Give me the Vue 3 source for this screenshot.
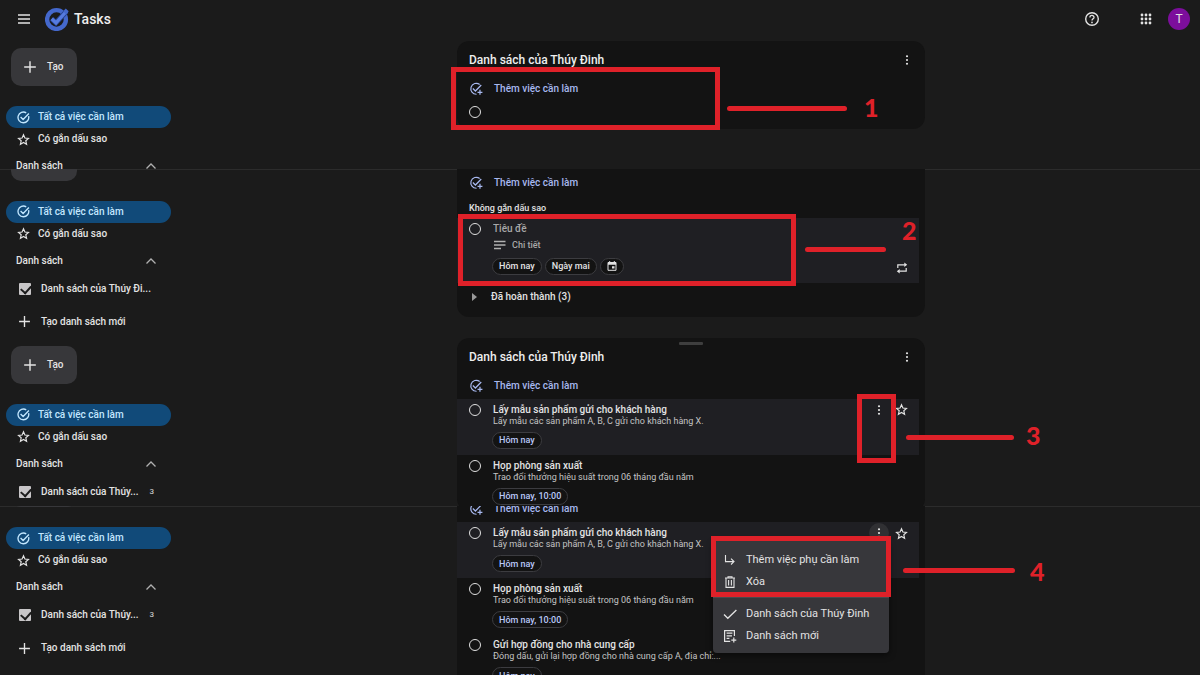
<script setup>
const listName = 'Danh sách của Thúy Đinh'

const tasks = [
  { title: 'Lấy mẫu sản phẩm gửi cho khách hàng', detail: 'Lấy mẫu các sản phẩm A, B, C gửi cho khách hàng X.', due: 'Hôm nay', active: true },
  { title: 'Họp phòng sản xuất', detail: 'Trao đổi thưởng hiệu suất trong 06 tháng đầu năm', due: 'Hôm nay, 10:00' },
  { title: 'Gửi hợp đồng cho nhà cung cấp', detail: 'Đóng dấu, gửi lại hợp đồng cho nhà cung cấp A, địa chỉ:...', due: 'Hôm nay' },
]

const panels = [
  { step: 1, list: 'Danh sách của Thúy Đi...', tasks: [] },
  { step: 2, list: 'Danh sách của Thúy Đi...', tasks: [] },
  { step: 3, list: 'Danh sách của Thúy...', count: 3, tasks: tasks.slice(0, 2) },
  { step: 4, list: 'Danh sách của Thúy...', count: 3, tasks },
]
</script>

<template>
  <div class="page">
    <svg class="defs" aria-hidden="true">
      <symbol id="plus" viewBox="0 0 24 24"><path d="M12 2v20M2 12h20" fill="none" stroke="currentColor" stroke-width="2.5" /></symbol>
      <symbol id="done" viewBox="0 0 24 24"><path d="M21.4 9.4A9.9 9.9 0 1 1 17 3.4M6.6 11l4.7 4.6L22 4.8" fill="none" stroke="currentColor" stroke-width="2.5" /></symbol>
      <symbol id="star" viewBox="0 0 24 24"><path d="M12 3.2l2.6 6.1 6.6.6-5 4.4 1.5 6.5-5.7-3.4-5.7 3.4 1.5-6.5-5-4.4 6.6-.6z" fill="none" stroke="currentColor" stroke-width="2.1" /></symbol>
      <symbol id="up" viewBox="0 0 24 24"><path d="M3 17l9-9 9 9" fill="none" stroke="currentColor" stroke-width="2.6" /></symbol>
      <symbol id="add-task" viewBox="0 0 24 24"><path d="M18.3 4.2A9.4 9.4 0 1 0 13 21M6.6 11.2l4.4 4.3L21 5.2M18.8 13.4v8.4M14.6 17.6H23" fill="none" stroke="currentColor" stroke-width="2.1" /></symbol>
      <symbol id="dots" viewBox="0 0 24 24"><g fill="currentColor"><circle cx="12" cy="3" r="2.6" /><circle cx="12" cy="12" r="2.6" /><circle cx="12" cy="21" r="2.6" /></g></symbol>
    </svg>

    <section v-for="p in panels" :key="p.step" class="panel" :class="'step-' + p.step">
      <header v-if="p.step === 1" class="topbar">
        <button class="icon-btn menu-btn" aria-label="Menu">
          <svg viewBox="0 0 14 14" width="14" height="14"><path d="M1 3h12M1 7h12M1 11h12" stroke="currentColor" stroke-width="1.4" /></svg>
        </button>
        <svg class="logo" viewBox="0 0 24 24" width="24" height="24">
          <circle cx="11.5" cy="12.5" r="9.4" fill="none" stroke="#4468cc" stroke-width="4.4" />
          <path d="M6.7 11.8l4.3 4L21.6 4.2" fill="none" stroke="#24418e" stroke-width="5" />
          <path d="M6.7 11.8l4.3 4L21.6 4.2" fill="none" stroke="#567be0" stroke-width="3.3" />
          <path d="M18.4 4.6l2.3-3 3 2.7-2.5 3.1z" fill="#4468cc" />
        </svg>
        <span class="brand">Tasks</span>
        <button class="icon-btn help" aria-label="Trợ giúp">
          <svg viewBox="0 0 16 16" width="16" height="16"><circle cx="8" cy="8" r="6.3" fill="none" stroke="currentColor" stroke-width="1.4" /><path d="M5.9 6.4C6 3.7 10.1 3.9 10 6.4 9.9 7.8 8 7.8 8 9.5" fill="none" stroke="currentColor" stroke-width="1.3" /><circle cx="8" cy="11.4" r=".85" fill="currentColor" /></svg>
        </button>
        <button class="icon-btn apps" aria-label="Ứng dụng">
          <svg viewBox="0 0 12 12" width="12" height="12" fill="currentColor"><template v-for="y in 3" :key="y"><circle v-for="x in 3" :key="x" :cx="x * 4 - 2" :cy="y * 4 - 2" r="1.4" /></template></svg>
        </button>
        <button class="avatar">T</button>
      </header>

      <aside class="sidebar">
        <button class="create"><svg width="14" height="14"><use href="#plus" /></svg>Tạo</button>
        <a class="nav selected" href="#"><svg width="13" height="13"><use href="#done" /></svg>Tất cả việc cần làm</a>
        <a class="nav" href="#"><svg width="13" height="13"><use href="#star" /></svg>Có gắn dấu sao</a>
        <button class="lists-head">Danh sách<svg width="12" height="12"><use href="#up" /></svg></button>
        <label class="list-item"><input type="checkbox" checked />{{ p.list }}<span v-if="p.count" class="count">{{ p.count }}</span></label>
        <button class="new-list"><svg width="13" height="13"><use href="#plus" /></svg>Tạo danh sách mới</button>
      </aside>

      <main class="board">
        <article class="card">
          <span v-if="p.step === 3" class="handle"></span>
          <div class="card-head">
            <h2>{{ listName }}</h2>
            <button class="icon-btn" aria-label="Tùy chọn"><svg width="10" height="10"><use href="#dots" /></svg></button>
          </div>
          <button class="add"><svg width="14" height="14"><use href="#add-task" /></svg>Thêm việc cần làm</button>

          <div v-if="p.step === 1" class="blank"><button class="ring" aria-label="Hoàn thành"></button></div>

          <template v-if="p.step === 2">
            <p class="group">Không gắn dấu sao</p>
            <div class="task editor active">
              <button class="ring" aria-label="Hoàn thành"></button>
              <div class="body">
                <input class="title-input" placeholder="Tiêu đề" aria-label="Tiêu đề" />
                <div class="detail-line">
                  <svg viewBox="0 0 12 10" width="12" height="10"><path d="M0 1.5h11.5M0 5h11.5M0 8.5h7" stroke="currentColor" stroke-width="1.3" /></svg>
                  <input placeholder="Chi tiết" aria-label="Chi tiết" />
                </div>
                <div class="chips">
                  <button class="chip">Hôm nay</button>
                  <button class="chip">Ngày mai</button>
                  <button class="chip" aria-label="Chọn ngày"><svg viewBox="0 0 10 10" width="10" height="10"><path d="M1 1.5h8v7.8H1zM2.7 0v2M7.3 0v2" fill="none" stroke="currentColor" /><path d="M1 1.2h8v2.6H1zM5 5.2h2.5v2.4H5z" fill="currentColor" /></svg></button>
                </div>
              </div>
              <button class="icon-btn repeat" aria-label="Lặp lại">
                <svg viewBox="0 0 12 12" width="12" height="12"><path d="M1.8 6V2.8h7M10.2 6v3.2h-7" fill="none" stroke="currentColor" stroke-width="1.2" /><path d="M8.3.6l2.9 2.2L8.3 5zM3.7 7L.8 9.2l2.9 2.2z" fill="currentColor" /></svg>
              </button>
            </div>
            <button class="completed"><svg viewBox="0 0 5 8" width="5" height="8"><path d="M0 0l5 4-5 4z" fill="currentColor" /></svg>Đã hoàn thành (3)</button>
          </template>

          <div v-for="t in p.tasks" :key="t.title" class="task" :class="{ active: t.active }">
            <button class="ring" aria-label="Hoàn thành"></button>
            <div class="body">
              <h3>{{ t.title }}</h3>
              <p>{{ t.detail }}</p>
              <button class="chip due">{{ t.due }}</button>
            </div>
            <div v-if="t.active" class="actions">
              <button class="icon-btn more" aria-label="Tùy chọn khác"><svg width="10" height="10"><use href="#dots" /></svg></button>
              <button class="icon-btn" aria-label="Gắn dấu sao"><svg width="13" height="13"><use href="#star" /></svg></button>
            </div>
          </div>

          <div v-if="p.step === 4" class="popup" role="menu">
            <button role="menuitem"><svg viewBox="0 0 14 14" width="14" height="14"><path d="M2.5 2v6.6h8M8 5.7l3 2.9-3 2.9" fill="none" stroke="currentColor" stroke-width="1.1" /></svg>Thêm việc phụ cần làm</button>
            <button role="menuitem"><svg viewBox="0 0 14 14" width="14" height="14"><path d="M2 3h10M5 2.6V1.8h4v.8M3 3v9.4h8V3M5.6 5v5.5M8.4 5v5.5" fill="none" stroke="currentColor" stroke-width="1.1" /></svg>Xóa</button>
            <hr />
            <button role="menuitem"><svg viewBox="0 0 14 14" width="14" height="14"><path d="M1 7.5l3.8 3.8L13.4 3" fill="none" stroke="currentColor" stroke-width="1.3" /></svg>{{ listName }}</button>
            <button role="menuitem"><svg viewBox="0 0 14 14" width="14" height="14"><path d="M11.4 7V1.6H1.6v10.8h5.6M3.6 4.2h5.8M3.6 6.8h5.4M3.6 9.4h2.8M10.8 8.6v5M8.3 11.1h5" fill="none" stroke="currentColor" stroke-width="1.2" /></svg>Danh sách mới</button>
          </div>

          <div class="mark frame"></div>
          <div class="mark pointer"></div>
          <strong class="mark number">{{ p.step }}</strong>
        </article>
      </main>
    </section>
  </div>
</template>

<style>
body { background: #1b1b1b; }
</style>

<style scoped>
* { box-sizing: border-box; }
.page {
  display: grid;
  grid-template-rows: repeat(4, minmax(0, 1fr));
  height: 100vh;
  color: #e3e3e3;
  background: #1b1b1b;
  font: 500 10px/12px Roboto, "Liberation Sans", sans-serif;
}
.defs { position: absolute; width: 0; height: 0; }
button, input { font: inherit; color: inherit; background: none; border: 0; padding: 0; margin: 0; outline: 0; }
button { display: flex; align-items: center; text-align: left; }
h2, h3, p { margin: 0; font: inherit; }
a { color: inherit; text-decoration: none; }
svg { flex: none; display: block; }

.panel {
  display: grid;
  grid-template-columns: 182px minmax(0, 1fr);
  grid-template-rows: auto minmax(0, 1fr);
  overflow: hidden;
}
.step-2, .step-4 { box-shadow: inset 0 1px #2c2c2c; }

.topbar { grid-column: 1 / -1; display: flex; align-items: center; height: 37px; padding: 0 10px 0 17px; }
.logo { margin-left: 14px; }
.brand { margin-left: 5px; font-size: 14px; line-height: 18px; color: #eee; }
.help { margin-left: auto; margin-right: 40px; }
.apps { margin-right: 16px; }
.avatar { justify-content: center; width: 22px; height: 22px; border-radius: 50%; background: #7c0e9c; font-size: 12px; font-weight: 400; }

.sidebar { display: flex; flex-direction: column; align-items: stretch; padding: 0 11px 0 6px; }
.step-1 .sidebar { margin-top: 11px; }
.step-2 .sidebar { margin-top: -26px; }
.step-3 .sidebar { margin-top: 8px; }
.step-4 .sidebar { margin-top: -37px; }
.create { flex: none; width: 66px; height: 38px; margin: 0 0 20px 5px; padding-left: 12px; gap: 10px; border-radius: 10px; background: #37373a; }
.nav { flex: none; display: flex; align-items: center; gap: 8px; height: 22px; padding-left: 11px; border-radius: 11px; }
.selected { background: #114a79; color: #c2e7ff; }
.lists-head { flex: none; justify-content: space-between; height: 22px; margin: 5px 14px 6px 10px; }
.lists-head svg { color: #b0b0b0; }
.list-item { flex: none; display: flex; align-items: center; height: 22px; margin-bottom: 11px; padding-left: 13px; }
.list-item input { appearance: none; position: relative; width: 12px; height: 12px; margin-right: 10px; border-radius: 1px; background: #c8c6c8; }
.list-item input::after { content: ""; position: absolute; left: 2px; top: 2px; width: 8px; height: 5px; border: solid #1b1b1b; border-width: 0 0 2px 2px; transform: rotate(-48deg); }
.count { margin-left: 11px; font-size: 8px; color: #c4c4c4; }
.new-list { flex: none; height: 22px; padding-left: 12px; gap: 10px; }

.board { display: flex; justify-content: center; align-items: flex-start; }
.card { position: relative; flex: 0 1 468px; min-width: 0; background: #131313; border-radius: 12px; }
.step-1 .card { margin-top: 4px; padding-bottom: 7px; }
.step-2 .card { margin-top: -34px; padding-bottom: 6px; }
.step-3 .card { margin-top: 0; }
.step-4 .card { margin-top: -45px; }
.card-head { display: flex; align-items: center; justify-content: space-between; height: 38px; padding: 0 13px 0 12px; }
.card-head h2 { font-size: 12px; line-height: 18px; color: #eee; }
.handle { position: absolute; left: 222px; top: 4px; width: 24px; height: 3px; background: #3e3e3e; border-radius: 1px; }
.add { height: 20px; margin-bottom: 3px; padding-left: 12px; gap: 11px; color: #a8b9f0; }
.icon-btn { justify-content: center; }
.ring { flex: none; width: 12px; height: 12px; border: 1px solid #e0e0e0; border-radius: 50%; }
.blank { display: flex; align-items: center; height: 20px; padding-left: 12px; }
.group { height: 22px; padding: 6px 0 0 12px; font-size: 9px; }

.task { position: relative; display: flex; align-items: flex-start; gap: 12px; height: 56px; margin-right: 6px; padding: 5px 11px 0 12px; }
.active { background: #1f1f23; }
.body { flex: 1; min-width: 0; }
.task h3 { font-size: 10px; line-height: 12px; white-space: nowrap; }
.task p { font-size: 9px; line-height: 11px; font-weight: 400; color: #c4c4c4; white-space: nowrap; }
.chip { height: 17px; padding: 0 6px; border: 1px solid #3c3c40; border-radius: 9px; background: #131313; font-size: 9px; }
.chip.due { margin: 5px 0 0 -1px; color: #b9c8f8; }
.actions { display: flex; align-items: center; gap: 6px; height: 12px; }
.more { width: 20px; height: 20px; border-radius: 50%; }
.step-4 .more { background: #303033; }

.editor { height: 65px; }
.title-input { display: block; width: 100%; height: 12px; font-size: 10px; }
input::placeholder { color: #a8a8a8; opacity: 1; }
.detail-line { display: flex; align-items: center; gap: 6px; height: 12px; margin: 4px 0 7px 1px; color: #b0b0b0; }
.detail-line input { flex: 1; height: 12px; font-size: 9px; }
.chips { display: flex; gap: 3px; margin-left: -1px; }
.repeat { align-self: flex-end; margin-bottom: 9px; }
.completed { height: 28px; padding-left: 15px; gap: 14px; }
.completed svg { color: #999; }

.popup { position: absolute; left: 256px; top: 80px; width: 176px; padding: 8px 0 6px; border-radius: 4px; background: #37373b; font-size: 11px; font-weight: 400; box-shadow: 0 2px 6px #0008; }
.popup button { width: 100%; height: 22px; padding-left: 10px; gap: 9px; }
.popup hr { height: 1px; margin: 4px 0 5px; border: 0; background: #4a4a4e; }

.mark { position: absolute; }
.frame { border: 5px solid #df2129; }
.pointer { height: 5px; border-radius: 3px; background: #df2129; }
.number { color: #df2129; font: 900 25px/28px Lato, "Open Sans", sans-serif; }
.step-1 .frame { left: -6px; top: 26px; width: 269px; height: 63px; }
.step-1 .pointer { left: 270px; top: 65px; width: 120px; }
.step-1 .number { left: 407px; top: 52px; }
.step-2 .frame { left: 1px; top: 79px; width: 338px; height: 72px; }
.step-2 .pointer { left: 348px; top: 112px; width: 81px; }
.step-2 .number { left: 445px; top: 81px; }
.step-3 .frame { left: 400px; top: 56px; width: 39px; height: 69px; }
.step-3 .pointer { left: 449px; top: 97px; width: 108px; }
.step-3 .number { left: 569px; top: 83px; }
.step-4 .frame { left: 254px; top: 75px; width: 180px; height: 61px; }
.step-4 .pointer { left: 446px; top: 107px; width: 112px; }
.step-4 .number { left: 573px; top: 96px; }
</style>
